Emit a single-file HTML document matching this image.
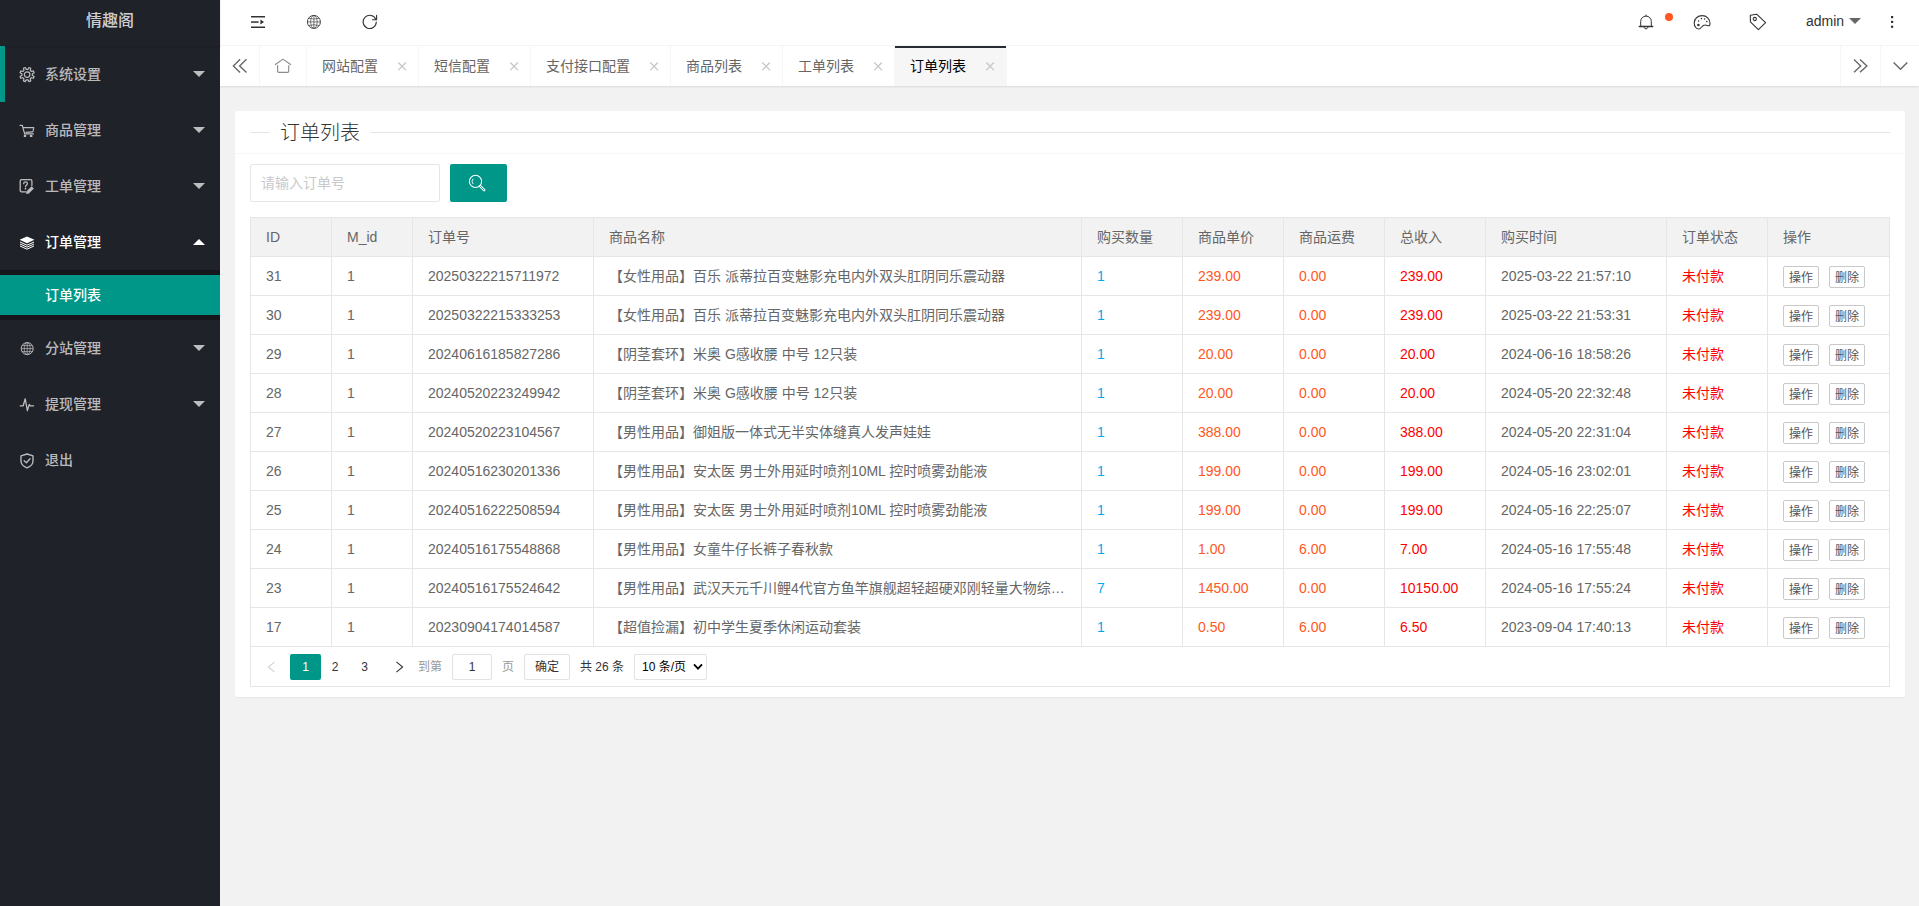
<!DOCTYPE html>
<html lang="zh-CN">
<head>
<meta charset="utf-8">
<title>情趣阁</title>
<style>
*{box-sizing:border-box;margin:0;padding:0}
html,body{width:1919px;height:906px;overflow:hidden}
body{font-family:"Liberation Sans","Noto Sans CJK SC",sans-serif;font-size:14px;line-height:24px;color:#666;background:#f2f2f2;position:relative}
a{color:inherit;text-decoration:none}
ul,li,dl,dd{list-style:none}
svg{display:block}

/* ---------- sidebar ---------- */
#side{position:absolute;left:0;top:0;width:220px;height:906px;background:#20222a;color:rgba(255,255,255,.7);z-index:5}
#logo{position:absolute;left:0;top:0;width:220px;height:46px;line-height:42px;text-align:center;font-size:16px;font-weight:500;color:rgba(255,255,255,.8);box-shadow:0 1px 2px 0 rgba(0,0,0,.15)}
#nav{position:absolute;left:0;top:46px;width:220px}
#nav .it{position:relative;height:56px;line-height:56px;padding-left:45px;font-size:14px;font-weight:500;color:rgba(255,255,255,.7)}
#nav .it.on{color:#fff}
#nav .it .ic{position:absolute;left:19px;top:20px;width:16px;height:16px}
#nav .it .more{position:absolute;left:193px;top:25px;width:0;height:0;border:6px solid transparent;border-top-color:rgba(255,255,255,.7)}
#nav .it.on .more{top:19px;border-top-color:transparent;border-bottom-color:#fff}
#nav .bar{position:absolute;left:0;top:0;width:5px;height:56px;background:#009688}
#nav .child{height:50px;padding:5px 0;background:rgba(0,0,0,.3)}
#nav .child .this{height:40px;line-height:40px;padding-left:45px;background:#009688;color:#fff;font-weight:500}

/* ---------- header ---------- */
#head{position:absolute;left:220px;top:0;width:1699px;height:46px;background:#fff;border-bottom:1px solid #f6f6f6}
#head .hi{position:absolute;top:0}
#head .admin{position:absolute;left:1586px;top:0;height:46px;line-height:42px;font-size:14px;color:#333}
#head .tri{position:absolute;left:1629px;top:18px;width:0;height:0;border:6px solid transparent;border-top-color:#666}
#head .dot{position:absolute;left:1445px;top:13px;width:8px;height:8px;border-radius:50%;background:#ff5722}

/* ---------- tabs ---------- */
#tabs{position:absolute;left:220px;top:46px;width:1699px;height:40px;background:#fff;box-shadow:0 1px 2px 0 rgba(0,0,0,.1)}
#tabs .ctl{position:absolute;top:0;width:40px;height:40px}
#tabs .ctl.l{left:0;border-right:1px solid #f6f6f6}
#tabs .ctl.r1{left:1620px;border-left:1px solid #f6f6f6}
#tabs .ctl.r2{left:1660px;border-left:1px solid #f6f6f6}
#tabs ul{position:absolute;left:40px;top:0;height:40px;white-space:nowrap;font-size:0}
#tabs li{position:relative;display:inline-block;vertical-align:top;height:40px;line-height:40px;padding:0 40px 0 15px;border-right:1px solid #f6f6f6;font-size:14px;color:#666}
#tabs li.home{padding:0 15px;width:47px}
#tabs li.this{background:#f6f6f6;color:#000}
#tabs li.this:after{content:"";position:absolute;left:0;top:0;width:100%;height:2px;background:#292b34}
#tabs li .x{position:absolute;right:10px;top:14px;width:12px;height:12px}

/* ---------- card ---------- */
#card{position:absolute;left:235px;top:111px;width:1670px;height:586px;background:#fff;border-radius:2px;box-shadow:0 1px 2px 0 rgba(0,0,0,.05)}
#chd{position:absolute;left:0;top:0;width:1670px;height:43px;border-bottom:1px solid #f6f6f6}
#chd .ln{position:absolute;left:15px;top:21px;width:1640px;height:1px;background:#e6e6e6}
#chd .lg{position:absolute;left:35px;top:0;height:42px;line-height:44px;padding:0 10px;background:#fff;font-size:20px;font-weight:300;color:#333;font-family:"Liberation Sans","Noto Sans CJK SC",sans-serif}
#kw{position:absolute;left:15px;top:53px;width:190px;height:38px;border:1px solid #e6e6e6;border-radius:2px;background:#fff;line-height:36px;padding-left:10px;font-size:14px;color:#c9c9c9}
#sbtn{position:absolute;left:215px;top:53px;width:57px;height:38px;border-radius:2px;background:#009688}

/* ---------- table ---------- */
#tb{position:absolute;left:15px;top:106px;width:1640px;height:470px;border:1px solid #e6e6e6;background:#fff}
#tb table{border-collapse:separate;border-spacing:0;table-layout:fixed;width:1639px}
#tb th,#tb td{height:39px;border-right:1px solid #e6e6e6;border-bottom:1px solid #e6e6e6;padding:0 15px;font-weight:400;text-align:left;font-size:14px;color:#666;line-height:28px;white-space:nowrap;overflow:hidden;text-overflow:ellipsis;vertical-align:middle}
#tb th{background:#f2f2f2}
#tb td.b{color:#01aaed}
#tb td.o{color:#ff5722}
#tb td.r{color:#f00}
#tb td.op{font-size:0;padding-right:0}
#tb .btn{display:inline-block;vertical-align:middle;width:36px;height:22px;line-height:23px;border:1px solid #c9c9c9;border-radius:2px;background:#fff;font-size:12px;color:#555;text-align:center;margin-right:10px;position:relative;top:1px}

/* ---------- pager ---------- */
#pg{position:absolute;left:0;top:429px;width:1639px;height:40px;font-size:12px;line-height:26px;color:#333}
#pg>*{position:absolute;top:7px;height:26px}
#pg .cur{left:39px;width:31px;background:#009688;color:#fff;border-radius:2px;text-align:center}
#pg .n{text-align:center;width:31px}
#pg .g{color:#999}
#pg .box{border:1px solid #e2e2e2;border-radius:2px;background:#fff;line-height:24px;text-align:center}
</style>
</head>
<body>

<div id="side">
  <div id="logo">情趣阁</div>
  <div id="nav">
    <div class="it"><i class="bar"></i><span class="ic"><svg width="16" height="17" viewBox="0 0 16 17"><g fill="none" stroke="#bdbdbf" stroke-width="1.2" stroke-linejoin="round"><path d="M13.33 9.43 L15.16 10.47 L14.41 12.27 L12.39 11.72 L11.22 12.89 L11.77 14.91 L9.97 15.66 L8.93 13.83 L7.27 13.83 L6.23 15.66 L4.43 14.91 L4.98 12.89 L3.81 11.72 L1.79 12.27 L1.04 10.47 L2.87 9.43 L2.87 7.77 L1.04 6.73 L1.79 4.93 L3.81 5.48 L4.98 4.31 L4.43 2.29 L6.23 1.54 L7.27 3.37 L8.93 3.37 L9.97 1.54 L11.77 2.29 L11.22 4.31 L12.39 5.48 L14.41 4.93 L15.16 6.73 L13.33 7.77Z"/><circle cx="8.1" cy="8.6" r="2.8"/></g></svg></span>系统设置<i class="more"></i></div>
    <div class="it"><span class="ic"><svg width="16" height="17" viewBox="0 0 16 17"><g fill="none" stroke="#bdbdbf" stroke-linejoin="round" stroke-linecap="round"><path d="M1.1 3.4 H3.3 L5.6 11.6" stroke-width="1.2"/><path d="M4.4 5.6 H14.8 L14 9.4 Q13.9 9.9 13.4 9.9 L7 10.4" stroke-width="1.1"/><path d="M5.6 11.9 H14.3" stroke-width="1.4"/></g><g fill="#bdbdbf"><rect x="4.8" y="13" width="2.4" height="2.1" rx=".3"/><rect x="10.9" y="13" width="2.5" height="2.1" rx=".3"/></g></svg></span>商品管理<i class="more"></i></div>
    <div class="it"><span class="ic"><svg width="16" height="17" viewBox="0 0 16 17"><g fill="none" stroke="#bdbdbf" stroke-linejoin="round" stroke-linecap="round"><path d="M12.9 7.6 V3 Q12.9 1.6 11.5 1.6 H2.6 Q1.2 1.6 1.2 3 V12.4 Q1.2 13.8 2.6 13.8 H6.6" stroke-width="1.3"/><path d="M4.7 5.7 Q4.7 3.9 6.6 3.9 Q8.4 3.9 8.4 5.4 Q8.4 6.4 7.3 7.2 Q6.5 7.8 6.5 8.8" stroke-width="1.3"/></g><g fill="#bdbdbf"><circle cx="6.5" cy="10.7" r=".85"/><path d="M7 16 L7.6 13.2 L12.6 8.3 L14.9 10.5 L9.9 15.4Z"/></g></svg></span>工单管理<i class="more"></i></div>
    <div class="it on"><span class="ic"><svg width="16" height="17" viewBox="0 0 16 17"><path fill="#fff" d="M8 2.4 L15.4 5.8 L8 9.2 L0.6 5.8Z"/><g fill="none" stroke="#fff" stroke-width="1" stroke-linejoin="round"><path d="M1 8 L8 11.2 L15 8"/><path d="M1 10 L8 13.2 L15 10"/><path d="M1 12 L8 15.2 L15 12"/></g></svg></span>订单管理<i class="more"></i></div>
    <div class="child"><div class="this">订单列表</div></div>
    <div class="it"><span class="ic"><svg width="16" height="17" viewBox="0 0 16 17"><g fill="none" stroke="#bdbdbf" stroke-width=".7"><circle cx="8.2" cy="8.6" r="6" stroke-width="1"/><ellipse cx="8.2" cy="8.6" rx="3" ry="6"/><path d="M8.2 2.6V14.6M2.2 8.6H14.2M3.1 5.6H13.3M3.1 11.6H13.3"/></g></svg></span>分站管理<i class="more"></i></div>
    <div class="it"><span class="ic"><svg width="16" height="17" viewBox="0 0 16 17"><path fill="none" stroke="#bdbdbf" stroke-width="1.3" stroke-linejoin="round" stroke-linecap="round" d="M1.2 9.8 H4.2 L6.2 2.8 L8.4 14.6 L10.2 8.4 L11.2 9.8 H14.6"/></svg></span>提现管理<i class="more"></i></div>
    <div class="it"><span class="ic"><svg width="16" height="17" viewBox="0 0 16 17"><g fill="none" stroke="#bdbdbf" stroke-width="1.35" stroke-linejoin="round" stroke-linecap="round"><path d="M8 2 L14 3.8 V9 C14 12.2 11.4 14.6 8 15.8 C4.6 14.6 2 12.2 2 9 V3.8Z"/><path d="M5.2 8.8 L7.4 10.8 L11 6.8"/></g></svg></span>退出</div>
  </div>
</div>

<div id="head">

  <svg class="hi" style="left:30px;top:14px" width="16" height="16" viewBox="0 0 16 16"><g fill="#333"><rect x="1" y="2" width="14" height="1.5"/><rect x="1" y="7.3" width="7.6" height="1.5"/><rect x="1" y="12.5" width="14" height="1.5"/><path d="M10.4 5.4 L14 8 L10.4 10.6Z"/></g></svg>
  <svg class="hi" style="left:86px;top:14px" width="16" height="16" viewBox="0 0 16 16"><g fill="none" stroke="#444" stroke-width=".7"><circle cx="7.9" cy="7.9" r="6.5" stroke-width="1"/><ellipse cx="7.9" cy="7.9" rx="3.3" ry="6.5"/><path d="M7.9 1.4V14.4M1.4 7.9H14.4M2.6 4.3 Q7.9 5.8 13.2 4.3M2.6 11.5 Q7.9 10 13.2 11.5"/></g></svg>
  <svg class="hi" style="left:141px;top:13px" width="18" height="18" viewBox="0 0 18 18"><g fill="none" stroke="#333" stroke-width="1.1" stroke-linecap="round" stroke-linejoin="round"><path d="M14.9 6.6 A6.6 6.6 0 1 0 15.3 9"/><path d="M15.6 2.4 V6.7 H11.4"/></g></svg>
  <svg class="hi" style="left:1418px;top:14px" width="16" height="17" viewBox="0 0 16 17"><g fill="none" stroke="#333" stroke-width="1" stroke-linejoin="round" stroke-linecap="round"><path d="M2.7 12.4 V7.4 A5.3 5.3 0 0 1 13.3 7.4 V12.4"/><path d="M1.2 12.5 H14.8" stroke-width="1.3"/><path d="M6.2 13.6 A1.9 1.9 0 0 0 9.8 13.6"/><path d="M8 1.8V1"/></g></svg>
  <svg class="hi" style="left:1473px;top:14px" width="18" height="16" viewBox="0 0 18 16"><path fill="none" stroke="#333" stroke-width="1.1" stroke-linejoin="round" d="M9.2 1.6 C4.6 1.6 1.2 4.9 1.2 9 C1.2 12.4 3.3 15 5.8 15 C8.4 15 8.6 11 12.2 11 C13.6 11 14.6 11.8 15.6 11.8 C16.5 11.8 17 11 17 9.4 C17 5 13.6 1.6 9.2 1.6Z"/><g fill="#333"><circle cx="5.4" cy="11" r="1.3"/><circle cx="5.6" cy="7" r=".8"/><circle cx="8.4" cy="4.6" r=".8"/><circle cx="11.6" cy="5" r=".8"/><circle cx="13.8" cy="7.6" r=".8"/></g></svg>
  <svg class="hi" style="left:1529px;top:13px" width="18" height="18" viewBox="0 0 18 18"><g fill="none" stroke="#333" stroke-width="1.1" stroke-linejoin="round"><path d="M1.3 2.2 L7.6 1.2 L16.6 9.6 L9.4 16.6 L1.4 8.8Z"/><circle cx="5.8" cy="6" r="1.6"/></g></svg>
  <svg class="hi" style="left:1670px;top:15px" width="4" height="14" viewBox="0 0 4 14"><g fill="#333"><rect x="1" y="1" width="2.2" height="2.2"/><rect x="1" y="5.8" width="2.2" height="2.2"/><rect x="1" y="10.7" width="2.2" height="2.2"/></g></svg>

  <span class="dot"></span>
  <span class="admin">admin</span><i class="tri"></i>
</div>

<div id="tabs">
  <div class="ctl l"><svg style="position:absolute;left:12px;top:12px" width="16" height="16" viewBox="0 0 16 16"><path d="M8.1 1.3 L1.4 7.9 L8.1 14.5 M14.5 1.3 L7.6 7.9 L14.5 14.5" fill="none" stroke="#686868" stroke-width="1.4"/></svg></div>
  <ul>
    <li class="home"><svg style="position:absolute;left:14px;top:11px" width="18" height="18" viewBox="0 0 18 18"><g fill="none" stroke="#8c8c8c" stroke-width="1.15" stroke-linejoin="round"><path d="M1 7.8 L9 2.1 L17 7.8"/><path d="M3.6 8.2 V14.2 Q3.6 15.4 4.8 15.4 H13.5 Q14.7 15.4 14.7 14.2 V8.2"/></g></svg></li><li>网站配置<i class="x"><svg width="12" height="12" viewBox="0 0 12 12"><path d="M2.3 2.5 L9.9 10.1 M9.9 2.5 L2.3 10.1" stroke="#c6c6c6" stroke-width="1.3" fill="none"/></svg></i></li><li>短信配置<i class="x"><svg width="12" height="12" viewBox="0 0 12 12"><path d="M2.3 2.5 L9.9 10.1 M9.9 2.5 L2.3 10.1" stroke="#c6c6c6" stroke-width="1.3" fill="none"/></svg></i></li><li>支付接口配置<i class="x"><svg width="12" height="12" viewBox="0 0 12 12"><path d="M2.3 2.5 L9.9 10.1 M9.9 2.5 L2.3 10.1" stroke="#c6c6c6" stroke-width="1.3" fill="none"/></svg></i></li><li>商品列表<i class="x"><svg width="12" height="12" viewBox="0 0 12 12"><path d="M2.3 2.5 L9.9 10.1 M9.9 2.5 L2.3 10.1" stroke="#c6c6c6" stroke-width="1.3" fill="none"/></svg></i></li><li>工单列表<i class="x"><svg width="12" height="12" viewBox="0 0 12 12"><path d="M2.3 2.5 L9.9 10.1 M9.9 2.5 L2.3 10.1" stroke="#c6c6c6" stroke-width="1.3" fill="none"/></svg></i></li><li class="this">订单列表<i class="x"><svg width="12" height="12" viewBox="0 0 12 12"><path d="M2.3 2.5 L9.9 10.1 M9.9 2.5 L2.3 10.1" stroke="#c6c6c6" stroke-width="1.3" fill="none"/></svg></i></li>
  </ul>
  <div class="ctl r1"><svg style="position:absolute;left:12px;top:12px" width="16" height="16" viewBox="0 0 16 16"><path d="M1 1.5 L7.7 7.9 L1 14.3 M7 1.5 L13.9 7.9 L7 14.3" fill="none" stroke="#686868" stroke-width="1.4"/></svg></div>
  <div class="ctl r2"><svg style="position:absolute;left:12px;top:12px" width="16" height="16" viewBox="0 0 16 16"><path d="M0.6 4.4 L7.5 11.2 L14.3 4.4" fill="none" stroke="#686868" stroke-width="1.4"/></svg></div>
</div>

<div id="card">
  <div id="chd"><div class="ln"></div><div class="lg">订单列表</div></div>
  <div id="kw">请输入订单号</div>
  <div id="sbtn"><svg style="position:absolute;left:17px;top:9px" width="20" height="20" viewBox="0 0 20 20"><g fill="none" stroke="#fff" stroke-linecap="round"><circle cx="8.5" cy="8.4" r="6.1" stroke-width="1.1"/><path d="M5.9 6 A3.6 3.6 0 0 0 5.9 10.8" stroke-width=".9"/><path d="M13.2 13.2 L17.2 17.2" stroke-width="2.6"/><path d="M13.4 13.4 L17 17" stroke="#009688" stroke-width=".9"/></g></svg></div>
  <div id="tb">
    <table>
      <colgroup><col style="width:81px"><col style="width:81px"><col style="width:181px"><col style="width:488px"><col style="width:101px"><col style="width:101px"><col style="width:101px"><col style="width:101px"><col style="width:181px"><col style="width:101px"><col style="width:122px"></colgroup>
      <thead><tr><th>ID</th><th>M_id</th><th>订单号</th><th>商品名称</th><th>购买数量</th><th>商品单价</th><th>商品运费</th><th>总收入</th><th>购买时间</th><th>订单状态</th><th>操作</th></tr></thead>
      <tbody>
        <tr><td>31</td><td>1</td><td>20250322215711972</td><td class="nm">【女性用品】百乐 派蒂拉百变魅影充电内外双头肛阴同乐震动器</td><td class="b">1</td><td class="o">239.00</td><td class="o">0.00</td><td class="r">239.00</td><td>2025-03-22 21:57:10</td><td class="r">未付款</td><td class="op"><a class="btn">操作</a><a class="btn">删除</a></td></tr>
        <tr><td>30</td><td>1</td><td>20250322215333253</td><td class="nm">【女性用品】百乐 派蒂拉百变魅影充电内外双头肛阴同乐震动器</td><td class="b">1</td><td class="o">239.00</td><td class="o">0.00</td><td class="r">239.00</td><td>2025-03-22 21:53:31</td><td class="r">未付款</td><td class="op"><a class="btn">操作</a><a class="btn">删除</a></td></tr>
        <tr><td>29</td><td>1</td><td>20240616185827286</td><td class="nm">【阴茎套环】米奥 G感收腰 中号 12只装</td><td class="b">1</td><td class="o">20.00</td><td class="o">0.00</td><td class="r">20.00</td><td>2024-06-16 18:58:26</td><td class="r">未付款</td><td class="op"><a class="btn">操作</a><a class="btn">删除</a></td></tr>
        <tr><td>28</td><td>1</td><td>20240520223249942</td><td class="nm">【阴茎套环】米奥 G感收腰 中号 12只装</td><td class="b">1</td><td class="o">20.00</td><td class="o">0.00</td><td class="r">20.00</td><td>2024-05-20 22:32:48</td><td class="r">未付款</td><td class="op"><a class="btn">操作</a><a class="btn">删除</a></td></tr>
        <tr><td>27</td><td>1</td><td>20240520223104567</td><td class="nm">【男性用品】御姐版一体式无半实体缝真人发声娃娃</td><td class="b">1</td><td class="o">388.00</td><td class="o">0.00</td><td class="r">388.00</td><td>2024-05-20 22:31:04</td><td class="r">未付款</td><td class="op"><a class="btn">操作</a><a class="btn">删除</a></td></tr>
        <tr><td>26</td><td>1</td><td>20240516230201336</td><td class="nm">【男性用品】安太医 男士外用延时喷剂10ML 控时喷雾劲能液</td><td class="b">1</td><td class="o">199.00</td><td class="o">0.00</td><td class="r">199.00</td><td>2024-05-16 23:02:01</td><td class="r">未付款</td><td class="op"><a class="btn">操作</a><a class="btn">删除</a></td></tr>
        <tr><td>25</td><td>1</td><td>20240516222508594</td><td class="nm">【男性用品】安太医 男士外用延时喷剂10ML 控时喷雾劲能液</td><td class="b">1</td><td class="o">199.00</td><td class="o">0.00</td><td class="r">199.00</td><td>2024-05-16 22:25:07</td><td class="r">未付款</td><td class="op"><a class="btn">操作</a><a class="btn">删除</a></td></tr>
        <tr><td>24</td><td>1</td><td>20240516175548868</td><td class="nm">【男性用品】女童牛仔长裤子春秋款</td><td class="b">1</td><td class="o">1.00</td><td class="o">6.00</td><td class="r">7.00</td><td>2024-05-16 17:55:48</td><td class="r">未付款</td><td class="op"><a class="btn">操作</a><a class="btn">删除</a></td></tr>
        <tr><td>23</td><td>1</td><td>20240516175524642</td><td class="nm">【男性用品】武汉天元千川鲤4代官方鱼竿旗舰超轻超硬邓刚轻量大物综合竿手竿</td><td class="b">7</td><td class="o">1450.00</td><td class="o">0.00</td><td class="r">10150.00</td><td>2024-05-16 17:55:24</td><td class="r">未付款</td><td class="op"><a class="btn">操作</a><a class="btn">删除</a></td></tr>
        <tr><td>17</td><td>1</td><td>20230904174014587</td><td class="nm">【超值捡漏】初中学生夏季休闲运动套装</td><td class="b">1</td><td class="o">0.50</td><td class="o">6.00</td><td class="r">6.50</td><td>2023-09-04 17:40:13</td><td class="r">未付款</td><td class="op"><a class="btn">操作</a><a class="btn">删除</a></td></tr>
      </tbody>
    </table>
    <div id="pg">
      <span style="left:14px;width:16px"><svg style="position:absolute;left:2px;top:7px" width="9" height="12" viewBox="0 0 9 12"><path d="M7.6 .8 L1.4 6 L7.6 11.2" fill="none" stroke="#d2d2d2" stroke-width="1.1"/></svg></span>
      <span class="cur">1</span>
      <span class="n" style="left:68.5px">2</span>
      <span class="n" style="left:98px">3</span>
      <span style="left:142px;width:16px"><svg style="position:absolute;left:2px;top:7px" width="9" height="12" viewBox="0 0 9 12"><path d="M1.4 .8 L7.6 6 L1.4 11.2" fill="none" stroke="#333" stroke-width="1.1"/></svg></span>
      <span class="g" style="left:167px">到第</span>
      <span class="box" style="left:201px;width:40px">1</span>
      <span class="g" style="left:251px">页</span>
      <span class="box" style="left:273px;width:46px">确定</span>
      <span style="left:329px">共 26 条</span>
      <span class="box sel" style="left:383px;width:73px;text-align:left;padding-left:7px;color:#000">10 条/页<svg style="position:absolute;right:3px;top:8px" width="10" height="8" viewBox="0 0 10 8"><path d="M1 1.4 L5 5.6 L9 1.4" fill="none" stroke="#000" stroke-width="1.8"/></svg></span>
    </div>
  </div>
</div>

</body>
</html>
